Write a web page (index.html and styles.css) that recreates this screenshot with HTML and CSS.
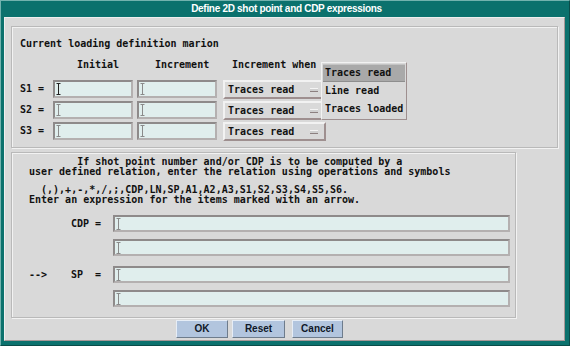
FILE: index.html
```html
<!DOCTYPE html>
<html>
<head>
<meta charset="utf-8">
<link rel="stylesheet" href="styles.css">
</head>
<body>
<div class="window">
  <div class="titlebar">Define 2D shot point and CDP expressions</div>
  <div class="content">
    <div class="group group-top">
      <div class="mono heading">Current loading definition marion</div>
      <div class="grid">
        <div></div>
        <div class="mono colhead h1">Initial</div>
        <div class="mono colhead h2">Increment</div>
        <div class="mono colhead h3">Increment when</div>

        <div class="mono lbl">S1 =</div>
        <div class="field w80"><svg class="ibeam dark" width="5" height="12" viewBox="0 0 5 12"><path d="M0.5 0.5H4.5M2.5 0.5V11.5M0.5 11.5H4.5" stroke="currentColor" fill="none"/></svg></div>
        <div class="field w80"><svg class="ibeam" width="5" height="12" viewBox="0 0 5 12"><path d="M0.5 0.5H4.5M2.5 0.5V11.5M0.5 11.5H4.5" stroke="currentColor" fill="none"/></svg></div>
        <div class="option mono">Traces read<span class="ind"></span></div>

        <div class="mono lbl">S2 =</div>
        <div class="field w80"><svg class="ibeam" width="5" height="12" viewBox="0 0 5 12"><path d="M0.5 0.5H4.5M2.5 0.5V11.5M0.5 11.5H4.5" stroke="currentColor" fill="none"/></svg></div>
        <div class="field w80"><svg class="ibeam" width="5" height="12" viewBox="0 0 5 12"><path d="M0.5 0.5H4.5M2.5 0.5V11.5M0.5 11.5H4.5" stroke="currentColor" fill="none"/></svg></div>
        <div class="option mono">Traces read<span class="ind"></span></div>

        <div class="mono lbl">S3 =</div>
        <div class="field w80"><svg class="ibeam" width="5" height="12" viewBox="0 0 5 12"><path d="M0.5 0.5H4.5M2.5 0.5V11.5M0.5 11.5H4.5" stroke="currentColor" fill="none"/></svg></div>
        <div class="field w80"><svg class="ibeam" width="5" height="12" viewBox="0 0 5 12"><path d="M0.5 0.5H4.5M2.5 0.5V11.5M0.5 11.5H4.5" stroke="currentColor" fill="none"/></svg></div>
        <div class="option mono">Traces read<span class="ind"></span></div>
      </div>
      <div class="menu mono">
        <div class="item active">Traces read</div>
        <div class="item">Line read</div>
        <div class="item">Traces loaded</div>
      </div>
    </div>

    <div class="group group-bottom">
<pre class="mono info">        If shot point number and/or CDP is to be computed by a
user defined relation, enter the relation using operations and symbols</pre>
<pre class="mono info second">  (,),+,-,*,/,;,CDP,LN,SP,A1,A2,A3,S1,S2,S3,S4,S5,S6.
Enter an expression for the items marked with an arrow.</pre>
      <div class="exprs">
        <div class="erow r1">
          <span class="mono arrow"></span><span class="mono ename">CDP</span><span class="mono eq">=</span>
          <div class="field wide"><svg class="ibeam" width="5" height="12" viewBox="0 0 5 12"><path d="M0.5 0.5H4.5M2.5 0.5V11.5M0.5 11.5H4.5" stroke="currentColor" fill="none"/></svg></div>
        </div>
        <div class="erow r2">
          <span class="mono arrow"></span><span class="mono ename"></span><span class="mono eq"></span>
          <div class="field wide"><svg class="ibeam" width="5" height="12" viewBox="0 0 5 12"><path d="M0.5 0.5H4.5M2.5 0.5V11.5M0.5 11.5H4.5" stroke="currentColor" fill="none"/></svg></div>
        </div>
        <div class="erow r3">
          <span class="mono arrow">--&gt;</span><span class="mono ename">SP</span><span class="mono eq">=</span>
          <div class="field wide"><svg class="ibeam" width="5" height="12" viewBox="0 0 5 12"><path d="M0.5 0.5H4.5M2.5 0.5V11.5M0.5 11.5H4.5" stroke="currentColor" fill="none"/></svg></div>
        </div>
        <div class="erow r4">
          <span class="mono arrow"></span><span class="mono ename"></span><span class="mono eq"></span>
          <div class="field wide"><svg class="ibeam" width="5" height="12" viewBox="0 0 5 12"><path d="M0.5 0.5H4.5M2.5 0.5V11.5M0.5 11.5H4.5" stroke="currentColor" fill="none"/></svg></div>
        </div>
      </div>
    </div>

    <div class="buttons">
      <div class="btn b-ok">OK</div>
      <div class="btn b-reset">Reset</div>
      <div class="btn b-cancel">Cancel</div>
    </div>
  </div>
</div>
</body>
</html>
```

FILE: styles.css
```css
html, body {
  margin: 0;
  padding: 0;
  background: #0d6e6a;
}

.window {
  width: 570px;
  height: 346px;
  box-sizing: border-box;
  border: 1px solid;
  border-color: #72b2ae #0a4c49 #0a4c49 #72b2ae;
  background: #0b716d;
  padding: 0 4px 4px 3px;
  display: flex;
  flex-direction: column;
}

.titlebar {
  height: 16px;
  flex: none;
  box-sizing: border-box;
  color: #ffffff;
  font-family: "Liberation Sans", Arial, sans-serif;
  font-weight: bold;
  font-size: 10px;
  letter-spacing: -0.3px;
  line-height: 15px;
  text-align: center;
  padding-left: 4px;
}

.content {
  flex: 1;
  background: #d9d9d9;
  border: 1px solid;
  border-color: #eeeeee #a69797 #a69797 #eeeeee;
  display: flex;
  flex-direction: column;
  align-items: flex-start;
  min-height: 0;
}

.mono {
  font-family: "DejaVu Sans Mono", "Liberation Mono", monospace;
  font-size: 10px;
  font-weight: bold;
  color: #111111;
  line-height: 12px;
}

.group {
  box-sizing: border-box;
  border: 1px solid #b9b9b9;
  box-shadow: inset 1px 1px 0 #f2f2f2, 1px 1px 0 #f2f2f2;
  margin-left: 6px;
}

.group-top {
  position: relative;
  width: 547px;
  height: 122px;
  margin-top: 8px;
  padding: 11px 0 0 8px;
}

.heading {
  height: 12px;
}

.grid {
  display: grid;
  grid-template-columns: 33px 84px 86px 103px;
  grid-template-rows: 18px 18px 18px 18px;
  row-gap: 3px;
  margin-top: 9px;
}

.colhead.h1 { padding-left: 24px; }
.colhead.h2 { padding-left: 18px; }
.colhead.h3 { padding-left: 9px; }

.grid > .lbl {
  line-height: 18px;
}

.field {
  box-sizing: border-box;
  height: 18px;
  background: #e0eeed;
  border: 2px solid;
  border-color: #8e8a8a #b4b0b0 #b4b0b0 #8e8a8a;
  display: flex;
  align-items: center;
  padding-left: 1px;
}

.w80 { width: 80px; }

.ibeam {
  display: block;
  color: #8a8a8a;
}
.ibeam.dark { color: #222222; }

.option {
  position: relative;
  box-sizing: border-box;
  width: 103px;
  height: 19px;
  border: 2px solid;
  border-color: #f2f2f2 #9e8f8f #9e8f8f #f2f2f2;
  background: #d9d9d9;
  padding-left: 3px;
  line-height: 15px;
}

.ind {
  position: absolute;
  right: 6px;
  top: 6px;
  width: 8px;
  height: 2px;
  background: #cfcfcf;
  border-top: 1px solid #f4f4f4;
  border-bottom: 1px solid #8c8080;
}

.menu {
  position: absolute;
  left: 309px;
  top: 35px;
  width: 86px;
  box-sizing: border-box;
  border: 1px solid;
  border-color: #f2f2f2 #9e8f8f #9e8f8f #f2f2f2;
  background: #d9d9d9;
  padding: 1px;
}

.menu .item {
  height: 18px;
  line-height: 18px;
  padding-left: 2px;
}

.menu .item.active {
  background: #a9a9a9;
  box-sizing: border-box;
  border-top: 1px solid #c4c4c4;
  border-bottom: 1px solid #8e8e8e;
  line-height: 16px;
}

.group-bottom {
  width: 505px;
  height: 166px;
  margin-top: 4px;
  padding: 4px 0 0 17px;
}

.info {
  margin: 0;
  line-height: 10px;
  white-space: pre;
}
.info.second {
  margin-top: 8px;
}

.exprs {
  margin-top: 10px;
  display: flex;
  flex-direction: column;
}

.erow {
  display: flex;
  align-items: center;
  height: 17px;
}
.erow.r2 { margin-top: 7px; }
.erow.r3 { margin-top: 10px; }
.erow.r4 { margin-top: 7px; }

.arrow { width: 42px; }
.ename { width: 24px; }
.eq { width: 18px; }

.field.wide {
  width: 397px;
  height: 17px;
}

.buttons {
  display: flex;
  margin-top: 2px;
  padding-left: 171px;
}

.btn {
  box-sizing: border-box;
  height: 18px;
  background: #b2c5de;
  border: 1px solid;
  border-color: #e6edf6 #6e7c8c #6e7c8c #e6edf6;
  font-family: "Liberation Sans", Arial, sans-serif;
  font-weight: bold;
  font-size: 10px;
  line-height: 16px;
  color: #101828;
  text-align: center;
}
.b-ok { width: 52px; }
.b-reset { width: 53px; margin-left: 4px; }
.b-cancel { width: 51px; margin-left: 7px; }
```
